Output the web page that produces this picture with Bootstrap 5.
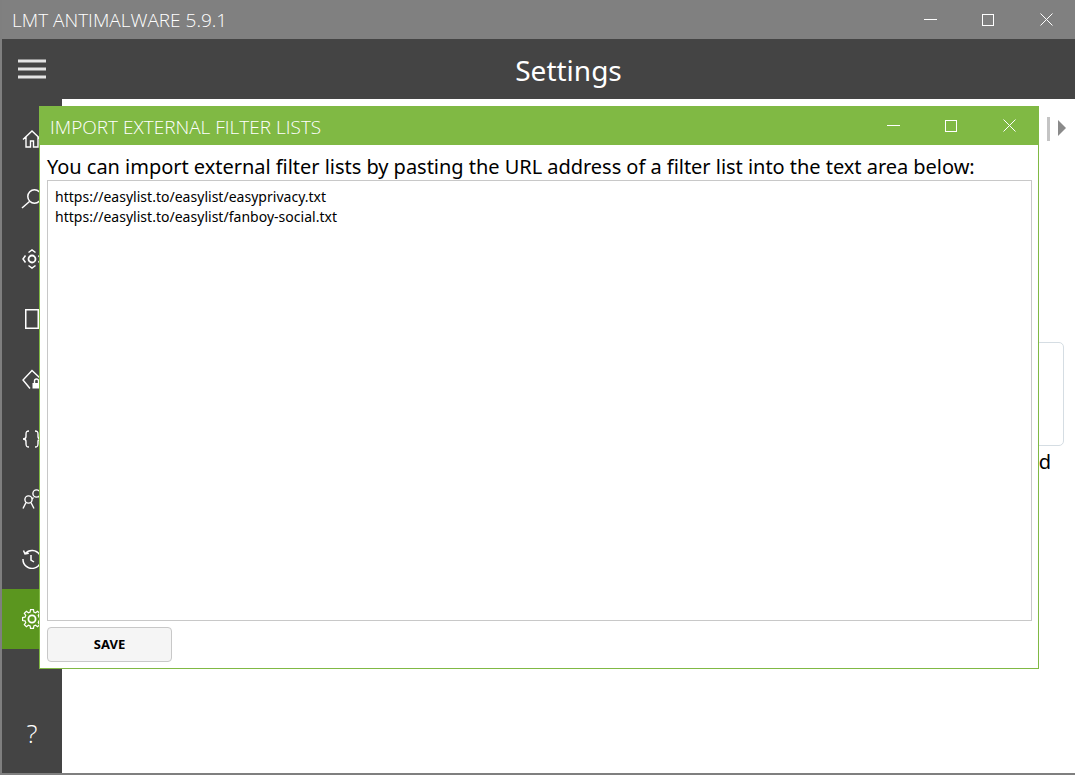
<!DOCTYPE html>
<html lang="en">
<head>
<meta charset="utf-8">
<title>LMT Antimalware</title>
<link href="https://cdn.jsdelivr.net/npm/bootstrap@5.3.0/dist/css/bootstrap.min.css" rel="stylesheet">
<style>
html,body{height:100%;margin:0}
body{width:1075px;height:775px;overflow:hidden;background:#fff;font-family:"Noto Sans","Open Sans",sans-serif;color:#000}
.app-win{position:relative;width:1075px;height:775px;border-left:2px solid #7f7f7f;border-bottom:2px solid #7f7f7f;overflow:hidden}
.title-strip{height:39px;background:#808080;margin-left:-2px;padding-left:12px;color:#fff;font-family:"Open Sans",sans-serif;font-size:19px;font-weight:300}
.title-strip>span{padding-top:2px}
.win-ctl{width:58px;height:39px;display:flex;align-items:center;justify-content:center}
.win-ctl svg{display:block}
.head-strip{height:60px;background:#444;position:relative}
.head-title{color:#fff;font-size:28px;line-height:1;width:100%;text-align:center;padding-left:60px;padding-top:2px}
.burger{position:absolute;left:16px;top:20px}
.side-rail{width:60px;background:#444;padding-top:10px;padding-bottom:10px;flex:none}
.rail-item{height:60px;display:flex;align-items:center;justify-content:center}
.rail-item.is-on{background:#5b961f}
.rail-help{color:#fff;font-family:"Open Sans",sans-serif;font-size:26px;font-weight:300;line-height:1}
.page-body{flex:1;min-height:0}
.page-main{flex:1;padding-top:16px;padding-right:9px}
.tab-sep{width:3px;height:24px;background:#c4c4c4;margin-right:8px;margin-top:2px}
.tab-arrow{width:0;height:0;border-left:8px solid #8a8a8a;border-top:8px solid transparent;border-bottom:8px solid transparent;margin-top:5px}
.tab-row{height:26px}
.bg-panel{margin-top:201px;height:104px;border:1px solid #d5dde3;border-radius:5px;margin-right:2px;width:972px;margin-left:auto}
.bg-text{font-size:20px;line-height:27px;margin-top:2px;padding-right:15px}
.dlg{position:absolute;left:37px;top:106px;width:1000px;height:563px;background:#fff;border:1px solid #80b944;border-top:0}
.dlg-title{height:39px;background:#80b944;color:#fff;font-family:"Open Sans",sans-serif;font-size:19px;font-weight:300;padding-left:11px;padding-right:1px;margin:0 -1px}
.dlg-title>span{padding-top:4px}
.dlg-lead{font-size:20px;line-height:27px;padding:8px 0 0 7px;height:35px;white-space:nowrap;letter-spacing:-.03px}
.url-box{display:block;width:985px;height:441px;margin-left:7px;border:1px solid #c8c8c8;border-radius:0;padding:6px 7px;font-size:14px;line-height:20px;resize:none;color:#000;font-family:inherit;outline:0;overflow:hidden;letter-spacing:.02px}
.save-btn{width:125px;height:35px;margin:6px 0 0 7px;background:#f5f5f5;border:1px solid #c8c8c8;border-radius:4px;font-size:13px;font-weight:700;color:#000;padding:0;line-height:1}
</style>
</head>
<body>
<div class="app-win d-flex flex-column">
  <div class="title-strip d-flex align-items-center justify-content-between flex-none">
    <span>LMT ANTIMALWARE 5.9.1</span>
    <div class="d-flex">
      <div class="win-ctl"><svg width="13" height="13" viewBox="0 0 13 13"><path d="M0 6.5h13" stroke="#fff" fill="none"/></svg></div>
      <div class="win-ctl"><svg width="12" height="12" viewBox="0 0 12 12"><rect x=".5" y=".5" width="11" height="11" stroke="#fff" fill="none"/></svg></div>
      <div class="win-ctl"><svg width="13" height="13" viewBox="0 0 13 13"><path d="M.5.5l12 12M12.5.5l-12 12" stroke="#fff" fill="none"/></svg></div>
    </div>
  </div>
  <div class="head-strip d-flex align-items-center">
    <svg class="burger" width="28" height="20" viewBox="0 0 28 20"><path d="M0 2h28M0 10h28M0 18h28" stroke="#e4e4e4" stroke-width="3" fill="none"/></svg>
    <div class="head-title">Settings</div>
  </div>
  <div class="page-body d-flex">
    <nav class="side-rail d-flex flex-column">
      <div class="rail-item"><svg width="20" height="18" viewBox="0 0 20 18" fill="none" stroke="#fff" stroke-width="1.4"><path d="M1 9.500 10 1l9 8.500M4 7v10h4.500v-6h3v6H16V7"/></svg></div>
      <div class="rail-item"><svg width="22" height="20" viewBox="0 0 22 20" fill="none" stroke="#fff" stroke-width="1.5"><circle cx="13.500" cy="7.500" r="6.700"/><path d="M8.500 12.500 1 19"/></svg></div>
      <div class="rail-item"><svg width="20" height="20" viewBox="0 0 20 20" fill="none" stroke="#fff" stroke-width="1.500"><circle cx="10" cy="10" r="3.500" stroke-width="1.800"/><path d="M6.500 3.500 10 1l3.500 2.500M6.500 16.500 10 19l3.500-2.500M3.500 6.500 1 10l2.500 3.500M16.500 6.500 19 10l-2.500 3.500"/></svg></div>
      <div class="rail-item"><svg width="14" height="20" viewBox="0 0 14 20" fill="none" stroke="#fff" stroke-width="1.500"><rect x=".75" y=".75" width="12.500" height="18.500"/></svg></div>
      <div class="rail-item"><svg width="21" height="21" viewBox="0 0 21 21" fill="none" stroke="#fff" stroke-width="1.400"><path d="M8 19.500 1 11l9-9.500 8.500 8"/><rect x="10.500" y="14" width="8" height="5.500" fill="#fff" stroke="none"/><path d="M12.500 14v-2a2 2 0 0 1 4 0v2"/></svg></div>
      <div class="rail-item"><svg width="20" height="18" viewBox="0 0 20 18" fill="none" stroke="#fff" stroke-width="1.400"><path d="M7 1C4 1 4 2.500 4 4.500v2C4 8 3 9 1 9c2 0 3 1 3 2.500v2C4 15.500 4 17 7 17M13 1c3 0 3 1.500 3 3.500v2C16 8 17 9 19 9c-2 0-3 1-3 2.500v2c0 2 0 3.500-3 3.500"/></svg></div>
      <div class="rail-item"><svg width="20" height="20" viewBox="0 0 20 20" fill="none" stroke="#fff" stroke-width="1.400"><circle cx="6.500" cy="10.500" r="3.600"/><path d="M1 19.500 4 13.500M12 19.500 9 13.500"/><circle cx="14.500" cy="4.500" r="3.600"/><path d="M11.500 8.500 10 10M17 8l2 3"/></svg></div>
      <div class="rail-item"><svg width="20" height="20" viewBox="0 0 20 20" fill="none" stroke="#fff" stroke-width="1.500"><path d="M3.200 4.500A9 9 0 1 1 1 10M1.500 1.500l1.500 3.500 3.800-.7"/><path d="M9 6v5l3 2"/></svg></div>
      <div class="rail-item is-on"><svg width="20" height="20" viewBox="0 0 20 20" fill="none" stroke="#fff" stroke-width="1.200"><path d="M8.140 3.050 8.510.62h2.980l.37 2.430 1.740.71 1.980-1.450 2.110 2.110-1.450 1.980.71 1.740 2.440.37v2.980l-2.440.37-.71 1.740 1.450 1.980-2.110 2.110-1.980-1.450-1.740.71-.37 2.440H8.510l-.37-2.440-1.740-.71-1.980 1.450-2.110-2.110 1.450-1.980-.71-1.740-2.430-.37V8.510l2.430-.37.71-1.740-1.450-1.980 2.110-2.110L6.400 3.760z"/><circle cx="10" cy="10" r="3.600" stroke-width="1.800"/></svg></div>
      <div class="rail-item mt-auto"><span class="rail-help">?</span></div>
    </nav>
    <main class="page-main d-flex flex-column">
      <div class="tab-row d-flex justify-content-end">
        <span class="tab-sep"></span><span class="tab-arrow"></span>
      </div>
      <div class="bg-panel"></div>
      <div class="bg-text text-end">d</div>
    </main>
  </div>
  <section class="dlg">
    <div class="dlg-title d-flex align-items-center justify-content-between">
      <span>IMPORT EXTERNAL FILTER LISTS</span>
      <div class="d-flex">
        <div class="win-ctl"><svg width="13" height="13" viewBox="0 0 13 13"><path d="M0 6.500h13" stroke="#fff" fill="none"/></svg></div>
        <div class="win-ctl"><svg width="12" height="12" viewBox="0 0 12 12"><rect x=".5" y=".5" width="11" height="11" stroke="#fff" fill="none"/></svg></div>
        <div class="win-ctl"><svg width="13" height="13" viewBox="0 0 13 13"><path d="M.5.5l12 12M12.500.5l-12 12" stroke="#fff" fill="none"/></svg></div>
      </div>
    </div>
    <div class="dlg-lead">You can import external filter lists by pasting the URL address of a filter list into the text area below:</div>
    <textarea class="url-box form-control" spellcheck="false">https://easylist.to/easylist/easyprivacy.txt
https://easylist.to/easylist/fanboy-social.txt</textarea>
    <button class="save-btn btn" type="button">SAVE</button>
  </section>
</div>
<script src="https://cdn.jsdelivr.net/npm/bootstrap@5.3.0/dist/js/bootstrap.bundle.min.js"></script>
</body>
</html>
